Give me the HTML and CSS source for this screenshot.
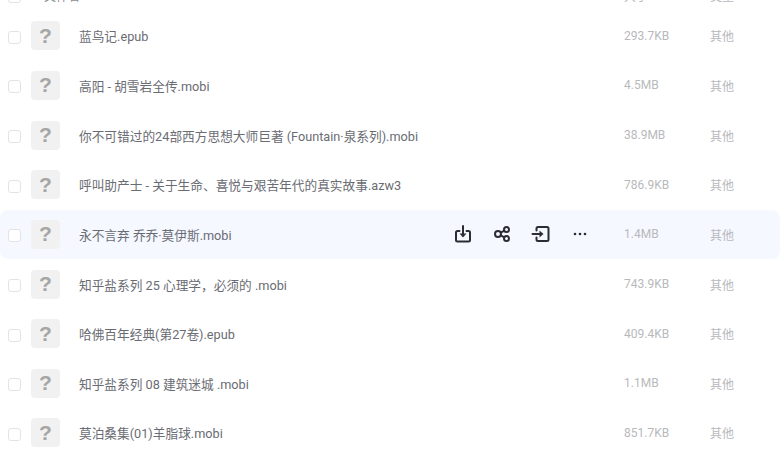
FILE: index.html
```html
<!DOCTYPE html>
<html lang="zh">
<head>
    <meta charset="UTF-8">
    <title>文件列表</title>
    <link rel="stylesheet" href="styles.css">
</head>
<body>
    <div class="file-list">
        <div class="header-row">
            <span class="check"></span>
            <span class="header-name">文件名</span>
            <span class="size">大小</span>
            <span class="type">类型</span>
        </div>

        <div class="row">
            <span class="check"></span>
            <span class="thumb">?</span>
            <span class="name">蓝鸟记.epub</span>
            <span class="size">293.7KB</span>
            <span class="type">其他</span>
        </div>
        <div class="row">
            <span class="check"></span>
            <span class="thumb">?</span>
            <span class="name">高阳 - 胡雪岩全传.mobi</span>
            <span class="size">4.5MB</span>
            <span class="type">其他</span>
        </div>
        <div class="row">
            <span class="check"></span>
            <span class="thumb">?</span>
            <span class="name">你不可错过的24部西方思想大师巨著 (Fountain·泉系列).mobi</span>
            <span class="size">38.9MB</span>
            <span class="type">其他</span>
        </div>
        <div class="row">
            <span class="check"></span>
            <span class="thumb">?</span>
            <span class="name">呼叫助产士 - 关于生命、喜悦与艰苦年代的真实故事.azw3</span>
            <span class="size">786.9KB</span>
            <span class="type">其他</span>
        </div>
        <div class="row row-hover">
            <span class="check"></span>
            <span class="thumb">?</span>
            <span class="name">永不言弃 乔乔·莫伊斯.mobi</span>
            <div class="actions">
                <svg class="icon" viewBox="0 0 20 20"><path d="M6.500 7H4.500A1.500 1.500 0 0 0 3 8.500V16A1.500 1.500 0 0 0 4.500 17.500H15.500A1.500 1.500 0 0 0 17 16V8.500A1.500 1.500 0 0 0 15.500 7H13.500"/><path d="M10 2V10"/><path class="solid" d="M6.500 9.500H13.500L10 13.500Z"/></svg>
                <svg class="icon" viewBox="0 0 20 20"><circle cx="6" cy="10" r="3"/><circle cx="14.500" cy="5.500" r="2.500"/><circle cx="14.500" cy="14.500" r="2.500"/><path d="M8.800 8.700L12.300 6.700M8.800 11.300L12.300 13.300"/></svg>
                <svg class="icon" viewBox="0 0 20 20"><path d="M5.500 6.500V4.500A1.500 1.500 0 0 1 7 3H16A1.500 1.500 0 0 1 17.500 4.500V15.500A1.500 1.500 0 0 1 16 17H7A1.500 1.500 0 0 1 5.500 15.500V13.500"/><path d="M1.500 10H9"/><path class="solid" d="M8.500 6.500L12.500 10L8.500 13.500Z"/></svg>
                <svg class="icon" viewBox="0 0 20 20"><circle class="solid" cx="5" cy="10" r="1.300"/><circle class="solid" cx="10" cy="10" r="1.300"/><circle class="solid" cx="15" cy="10" r="1.300"/></svg>
            </div>
            <span class="size">1.4MB</span>
            <span class="type">其他</span>
        </div>
        <div class="row">
            <span class="check"></span>
            <span class="thumb">?</span>
            <span class="name">知乎盐系列 25 心理学，必须的 .mobi</span>
            <span class="size">743.9KB</span>
            <span class="type">其他</span>
        </div>
        <div class="row">
            <span class="check"></span>
            <span class="thumb">?</span>
            <span class="name">哈佛百年经典(第27卷).epub</span>
            <span class="size">409.4KB</span>
            <span class="type">其他</span>
        </div>
        <div class="row">
            <span class="check"></span>
            <span class="thumb">?</span>
            <span class="name">知乎盐系列 08 建筑迷城 .mobi</span>
            <span class="size">1.1MB</span>
            <span class="type">其他</span>
        </div>
        <div class="row">
            <span class="check"></span>
            <span class="thumb">?</span>
            <span class="name">莫泊桑集(01)羊脂球.mobi</span>
            <span class="size">851.7KB</span>
            <span class="type">其他</span>
        </div>
    </div>
</body>
</html>
```

FILE: styles.css
```css
html, body {
    margin: 0;
    height: 100%;
    overflow: hidden;
    background-color: white;
}

body {
    font-family: "Roboto", "Noto Sans CJK SC", sans-serif;
    font-size: 12.700px;
    color: #6a6c73;
}

.file-list {
    margin-top: -21px;
}

.header-row {
    display: flex;
    align-items: center;
    height: 32px;
    padding-left: 8px;
    color: #8a8c92;
}

.header-name {
    margin-left: 23px;
    flex: 1;
    font-size: 12px;
}

.row {
    display: flex;
    align-items: center;
    height: 49.650px;
    padding-left: 8px;
    border-radius: 8px;
}

.row-hover {
    background-color: #f5f8ff;
}

.check {
    width: 13px;
    height: 13px;
    margin-top: 3px;
    box-sizing: border-box;
    border: 1px solid #e3e3e6;
    border-radius: 3px;
    background: white;
    flex: none;
}

.thumb {
    width: 29px;
    height: 29px;
    margin-left: 10px;
    flex: none;
    display: flex;
    align-items: center;
    justify-content: center;
    background-color: #f1f1f1;
    border-radius: 4px;
    color: #a6a6a6;
    font-family: "Liberation Sans", sans-serif;
    font-size: 21px;
    font-weight: bold;
}

.name {
    margin-left: 19px;
    flex: 1;
    white-space: nowrap;
}

.actions {
    display: flex;
    align-items: center;
    gap: 19px;
    margin-right: 34px;
}

.icon {
    width: 20px;
    height: 20px;
    fill: none;
    stroke: #2b2d33;
    stroke-width: 2;
    stroke-linecap: round;
    stroke-linejoin: round;
}

.icon .solid {
    fill: #2b2d33;
    stroke: none;
}

.size {
    width: 86px;
    flex: none;
    font-size: 12px;
    color: #b8b9bd;
}

.type {
    width: 70px;
    flex: none;
    font-size: 12px;
    color: #b8b9bd;
}
```
